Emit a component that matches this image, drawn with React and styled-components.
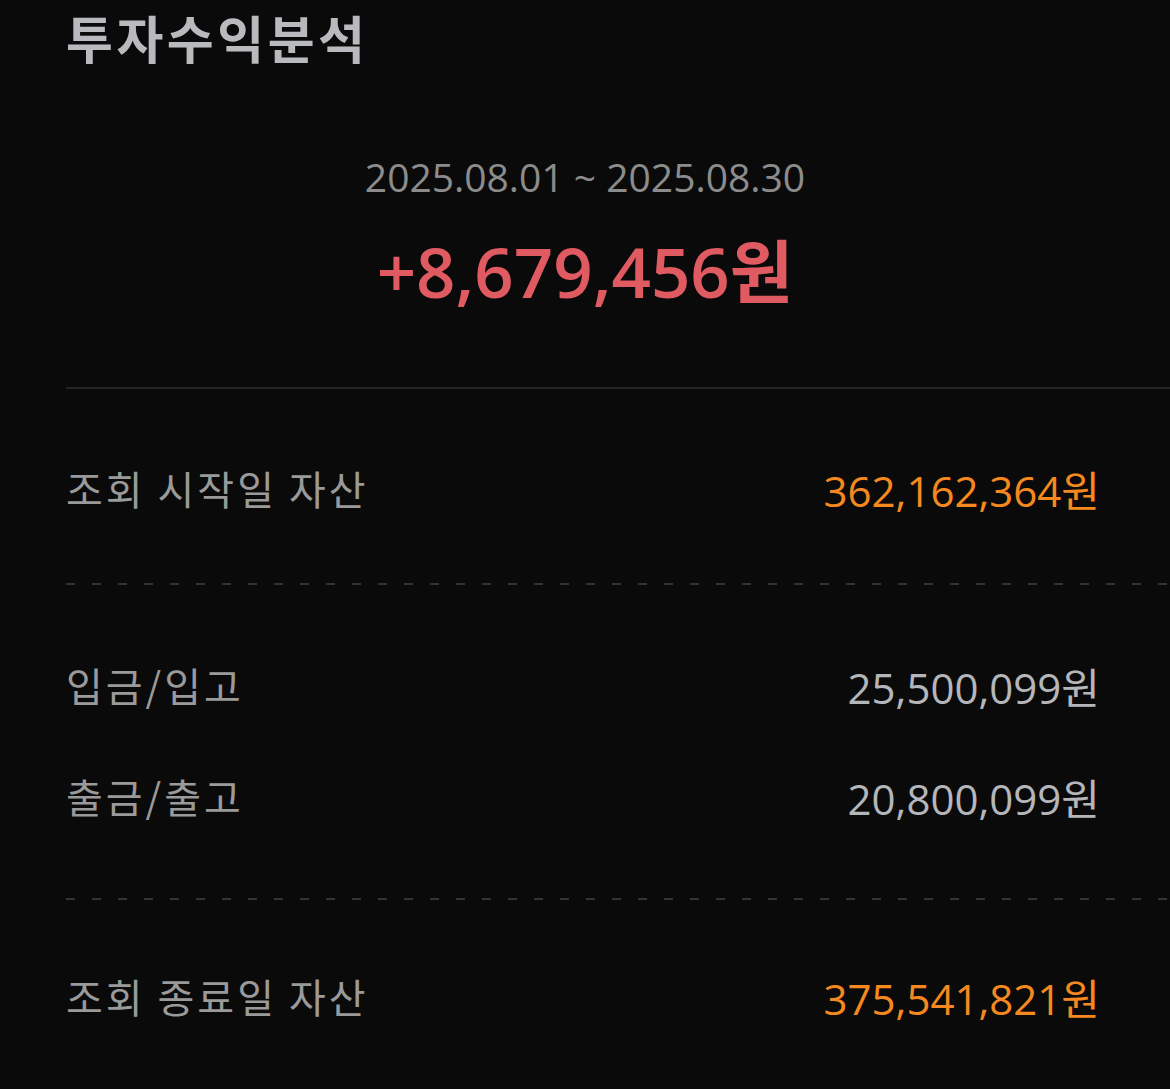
import React from "react"
import styled, { createGlobalStyle } from "styled-components"

const GlobalStyle = createGlobalStyle`
  html, body {
    margin: 0;
    padding: 0;
    background: #0a0a0a;
  }
  body {
    font-family: "Open Sans", "Noto Sans CJK KR", sans-serif;
    overflow: hidden;
  }
`

const summary = {
  period: "2025.08.01 ~ 2025.08.30",
  profit: "+8,679,456원",
}

// padding is per block: [top, bottom]
const sections = [
  {
    space: [69, 67],
    rows: [{ label: "조회 시작일 자산", value: "362,162,364원", tone: "accent" }],
  },
  {
    space: [70, 74],
    rows: [
      { label: "입금/입고", value: "25,500,099원" },
      { label: "출금/출고", value: "20,800,099원" },
    ],
  },
  {
    space: [66, 0],
    rows: [{ label: "조회 종료일 자산", value: "375,541,821원", tone: "accent" }],
  },
]

export default function App() {
  return (
    <>
      <GlobalStyle />
      <Page>
        <Title>투자수익분석</Title>
        <Summary>
          <Period>{summary.period}</Period>
          <Profit>{summary.profit}</Profit>
        </Summary>
        <SolidRule />
        {sections.map((section, i) => (
          <Section
            key={i}
            $top={section.space[0]}
            $bottom={section.space[1]}
            $dashed={i < sections.length - 1}
          >
            {section.rows.map(row => (
              <Row key={row.label}>
                <Label>{row.label}</Label>
                <Value $tone={row.tone}>{row.value}</Value>
              </Row>
            ))}
          </Section>
        ))}
      </Page>
    </>
  )
}

const Page = styled.div`
  width: 1170px;
  height: 1089px;
  box-sizing: border-box;
  padding-left: 66px;
  background: #0a0a0a;
`

const Title = styled.h1`
  margin: 7px 0 0 0;
  font-family: "Noto Sans CJK KR", sans-serif;
  font-size: 51px;
  line-height: 60px;
  font-weight: 700;
  color: #b8babd;
  letter-spacing: 3.5px;
`

const Summary = styled.div`
  display: flex;
  flex-direction: column;
  align-items: center;
  padding-right: 66px;
  margin-top: 85px;
`

const Period = styled.div`
  font-size: 39px;
  line-height: 49px;
  color: #8c8c8c;
`

const Profit = styled.div`
  margin-top: 29px;
  font-size: 69px;
  line-height: 82px;
  font-weight: 600;
  color: #e05a62;
`

const SolidRule = styled.div`
  margin-top: 75px;
  height: 2px;
  background: #252525;
`

const Section = styled.div`
  display: flex;
  flex-direction: column;
  gap: 51px;
  padding: ${p => p.$top}px 70px ${p => p.$bottom}px 0;
  background-image: ${p =>
    p.$dashed
      ? "repeating-linear-gradient(90deg, #333 0 9px, transparent 9px 26px)"
      : "none"};
  background-size: 100% 2px;
  background-repeat: no-repeat;
  background-position: left bottom;
`

const Row = styled.div`
  display: flex;
  justify-content: space-between;
  align-items: center;
  height: 60px;
`

const Label = styled.span`
  font-family: "Noto Sans CJK KR", sans-serif;
  font-size: 40px;
  letter-spacing: 3px;
  color: #9a9a9a;
`

const Value = styled.span`
  font-size: 42px;
  color: ${p => (p.$tone === "accent" ? "#f5891f" : "#b4b6ba")};
`
